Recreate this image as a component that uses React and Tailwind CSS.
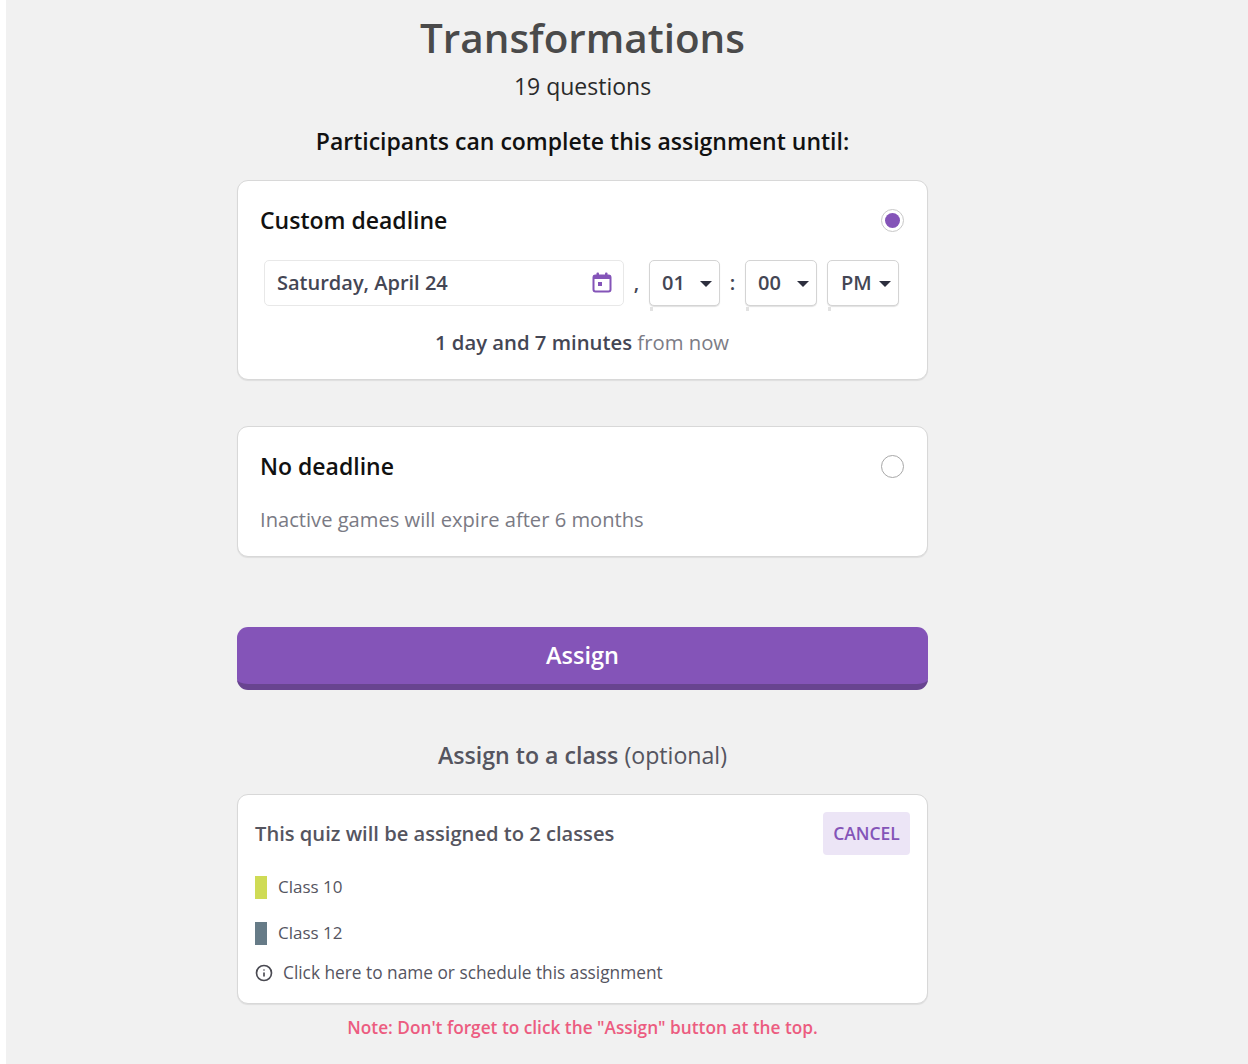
import React from 'react';
import { Info } from 'lucide-react';

function Caret() {
  return <span className="mt-[2px] w-0 h-0 border-x-[6px] border-x-transparent border-t-[6px] border-t-[#2d2f3e]" />;
}

function TimeSelect({ value, width, pad }) {
  return (
    <div className={`relative flex items-center justify-between h-[46px] ${width} ${pad} bg-white border border-[#d4d4d4] rounded-[5px] shadow-[0_1px_1px_rgba(0,0,0,0.12)]`}>
      <span className="text-[20px] font-semibold text-[#444654]">{value}</span>
      <Caret />
      <span className="absolute left-0 -bottom-[6px] w-[3px] h-[4px] bg-[#e2e2e2]" />
    </div>
  );
}

function ClassRow({ color, label }) {
  return (
    <div className="flex items-center gap-[11px] h-[24px]">
      <span className={`w-[12px] h-[23px] ${color}`} />
      <span className="text-[17px] text-[#55555f]">{label}</span>
    </div>
  );
}

export default function App() {
  return (
    <div className="min-h-[1064px] bg-white pl-[6px] font-['Open_Sans',sans-serif]">
      <div className="min-h-[1064px] bg-[#f1f1f1] pl-[231px]">
        <div className="w-[691px] flex flex-col items-stretch text-center">
          <h1 className="mt-[12px] h-[52px] leading-[52px] text-[40.4px] font-semibold text-[#4a4a4a]">Transformations</h1>
          <p className="mt-[6px] h-[32px] leading-[32px] text-[23px] text-[#2a2a2a]">19 questions</p>
          <p className="mt-[23px] h-[32px] leading-[32px] text-[23px] font-semibold text-[#111]">Participants can complete this assignment until:</p>

          <div className="mt-[23px] h-[200px] bg-white border border-[#d8d8d8] rounded-[11px] shadow-[0_1px_1px_rgba(0,0,0,0.08)] pl-[22px] pr-[23px] text-left">
            <div className="flex items-center justify-between mt-[22px] h-[34px]">
              <span className="text-[23px] font-semibold text-[#111]">Custom deadline</span>
              <span className="flex items-center justify-center w-[23px] h-[23px] rounded-full bg-white border border-[#c8c8c8]">
                <span className="w-[15px] h-[15px] rounded-full bg-[#8454b8]" />
              </span>
            </div>
            <div className="flex items-center mt-[23px] ml-[4px] h-[46px]">
              <div className="flex items-center justify-between w-[360px] h-[46px] pl-[12px] pr-[10px] bg-white border border-[#e8e8e8] rounded-[5px]">
                <span className="text-[20px] font-semibold text-[#444654]">Saturday, April 24</span>
                <svg width="22" height="24" viewBox="0 0 22 24" fill="none" className="text-[#8454b8]">
                  <rect x="2.5" y="4.5" width="17" height="16" rx="2" stroke="currentColor" strokeWidth="2" />
                  <rect x="2.5" y="4.5" width="17" height="3.5" fill="currentColor" />
                  <rect x="5.5" y="1.5" width="2.5" height="4" rx="1" fill="currentColor" />
                  <rect x="14" y="1.5" width="2.5" height="4" rx="1" fill="currentColor" />
                  <rect x="7" y="11" width="4" height="4" fill="currentColor" />
                </svg>
              </div>
              <span className="w-[25px] text-center text-[20px] font-semibold text-[#444654]">,</span>
              <TimeSelect value="01" width="w-[71px]" pad="pl-[12px] pr-[7px]" />
              <span className="w-[25px] text-center text-[20px] font-semibold text-[#444654]">:</span>
              <TimeSelect value="00" width="w-[72px]" pad="pl-[12px] pr-[7px]" />
              <span className="w-[10px]" />
              <TimeSelect value="PM" width="w-[72px]" pad="pl-[13px] pr-[7px]" />
            </div>
            <p className="mt-[19px] text-center text-[20.3px] leading-[34px] text-[#7c7c86]">
              <span className="font-semibold text-[#444654]">1 day and 7 minutes</span> from now
            </p>
          </div>

          <div className="mt-[46px] h-[131px] bg-white border border-[#d8d8d8] rounded-[11px] shadow-[0_1px_1px_rgba(0,0,0,0.08)] pl-[22px] pr-[23px] text-left">
            <div className="flex items-center justify-between mt-[22px] h-[34px]">
              <span className="text-[23px] font-semibold text-[#111]">No deadline</span>
              <span className="w-[23px] h-[23px] rounded-full bg-white border border-[#a8a8a8]" />
            </div>
            <p className="mt-[19px] text-[20.15px] leading-[34px] text-[#7a7a84]">Inactive games will expire after 6 months</p>
          </div>

          <button className="mt-[70px] h-[63px] rounded-[11px] bg-[#8454b8] border-b-[6px] border-b-[#684490] text-[23.5px] font-semibold text-white">Assign</button>

          <p className="mt-[48px] h-[34px] leading-[34px] text-[23.15px] text-[#55555f]">
            <span className="font-semibold">Assign to a class</span> (optional)
          </p>

          <div className="mt-[22px] h-[210px] bg-white border border-[#d8d8d8] rounded-[11px] shadow-[0_1px_1px_rgba(0,0,0,0.08)] pl-[17px] pr-[17px] text-left">
            <div className="flex items-center justify-between mt-[17px] h-[43px]">
              <span className="text-[20.15px] font-semibold text-[#55555f]">This quiz will be assigned to 2 classes</span>
              <span className="flex items-center justify-center w-[87px] h-[43px] rounded-[4px] bg-[#ece5f6] text-[17.5px] font-semibold text-[#8454b8]">CANCEL</span>
            </div>
            <div className="mt-[20px] flex flex-col gap-[22px]">
              <ClassRow color="bg-[#cfdb55]" label="Class 10" />
              <ClassRow color="bg-[#667b87]" label="Class 12" />
            </div>
            <div className="mt-[16px] flex items-center gap-[10px]">
              <Info size={18} strokeWidth={2.2} className="text-[#4a4a52]" />
              <span className="text-[17.3px] leading-[24px] text-[#55555f]">Click here to name or schedule this assignment</span>
            </div>
          </div>

          <p className="mt-[12px] text-[17.25px] leading-[24px] font-semibold text-[#ec5c80]">Note: Don't forget to click the "Assign" button at the top.</p>
        </div>
      </div>
    </div>
  );
}
